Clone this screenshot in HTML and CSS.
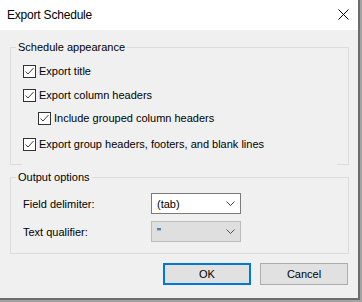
FILE: index.html
```html
<!DOCTYPE html>
<html>
<head>
<meta charset="utf-8">
<link rel="stylesheet" href="styles.css">
</head>
<body>
<div class="window">
  <div class="titlebar">
    <span class="title">Export Schedule</span>
    <span class="close">
      <svg width="11" height="11" viewBox="0 0 11 11"><path d="M0.5 0.5 L10.5 10.5 M10.5 0.5 L0.5 10.5" stroke="#000" stroke-width="1" fill="none"/></svg>
    </span>
  </div>
  <div class="content">
    <fieldset class="group group-appearance">
      <legend>Schedule appearance</legend>
      <div class="row r1"><span class="cb"><svg width="11" height="11" viewBox="0 0 11 11"><polyline points="1.5,5.5 4,8 9.5,2" fill="none" stroke="#3c3c3c" stroke-width="1"/></svg></span><span class="lbl">Export title</span></div>
      <div class="row r2"><span class="cb"><svg width="11" height="11" viewBox="0 0 11 11"><polyline points="1.5,5.5 4,8 9.5,2" fill="none" stroke="#3c3c3c" stroke-width="1"/></svg></span><span class="lbl">Export column headers</span></div>
      <div class="row r3 nested"><span class="cb"><svg width="11" height="11" viewBox="0 0 11 11"><polyline points="1.5,5.5 4,8 9.5,2" fill="none" stroke="#3c3c3c" stroke-width="1"/></svg></span><span class="lbl">Include grouped column headers</span></div>
      <div class="row r4"><span class="cb"><svg width="11" height="11" viewBox="0 0 11 11"><polyline points="1.5,5.5 4,8 9.5,2" fill="none" stroke="#3c3c3c" stroke-width="1"/></svg></span><span class="lbl">Export group headers, footers, and blank lines</span></div>
    </fieldset>
    <fieldset class="group group-output">
      <legend>Output options</legend>
      <div class="field f1">
        <span class="flabel">Field delimiter:</span>
        <span class="select"><span class="val">(tab)</span><svg width="9" height="5" viewBox="0 0 9 5"><polyline points="0.5,0.5 4.5,4.5 8.5,0.5" fill="none" stroke="#444" stroke-width="1"/></svg></span>
      </div>
      <div class="field f2">
        <span class="flabel">Text qualifier:</span>
        <span class="select disabled"><span class="val">"</span><svg width="9" height="5" viewBox="0 0 9 5"><polyline points="0.5,0.5 4.5,4.5 8.5,0.5" fill="none" stroke="#555" stroke-width="1"/></svg></span>
      </div>
    </fieldset>
    <div class="buttons">
      <span class="btn default">OK</span>
      <span class="btn">Cancel</span>
    </div>
  </div>
</div>
</body>
</html>
```
FILE: styles.css
```css
html, body {
  margin: 0;
  padding: 0;
}
body {
  background: #a3a3a3;
  width: 362px;
  height: 302px;
  overflow: hidden;
  font-family: "Liberation Sans", Arial, sans-serif;
  font-size: 11px;
  color: #000;
}
.window {
  width: 358px;
  height: 298px;
  background: #f0f0f0;
  border-right: 2px solid #6c6c6c;
  border-bottom: 2px solid #6c6c6c;
}
.titlebar {
  height: 30px;
  background: #fff;
  display: flex;
  align-items: center;
  padding-left: 7px;
}
.title {
  font-size: 12px;
  letter-spacing: -0.2px;
  line-height: 16px;
  margin-top: -1px;
}
.close {
  margin-left: auto;
  margin-right: 9px;
  width: 11px;
  height: 11px;
  display: flex;
  margin-top: -1px;
}
.content {
  padding-top: 10px;
}
.group {
  box-sizing: border-box;
  width: 339px;
  margin: 0 0 0 10px;
  padding: 0;
  border: 1px solid #dcdcdc;
  min-width: 0;
}
.group legend {
  margin-left: 5px;
  padding: 0 2px;
  line-height: 15px;
  height: 15px;
}
.row {
  display: flex;
  align-items: center;
  height: 16px;
  line-height: 16px;
  margin-left: 12px;
}
.cb {
  box-sizing: border-box;
  width: 13px;
  height: 13px;
  border: 1px solid #333;
  background: #fff;
  display: flex;
  margin-right: 3px;
}
.r1 { margin-top: 8px; }
.r2 { margin-top: 8px; }
.r3 { margin-top: 7px; margin-left: 27px; }
.r4 {
  margin-top: 10px;
  margin-left: 11px;
  padding-left: 1px;
  width: 314px;
  height: 16px;
  padding-bottom: 13px;
  margin-bottom: -1px;
  background: #f0f0f0;
  align-items: flex-start;
}
.r4 .cb { margin-top: 2px; }
.group-output {
  margin-top: 5px;
  padding-bottom: 11px;
}
.field {
  display: grid;
  grid-template-columns: 128px 90px;
  align-items: center;
  margin-left: 12px;
}
.f1 { margin-top: 8px; }
.f2 { margin-top: 7px; }
.flabel {
  line-height: 16px;
}
.select {
  box-sizing: border-box;
  height: 21px;
  border: 1px solid #7a7a7a;
  background: #fff;
  display: flex;
  align-items: center;
  padding: 0 5px 0 5px;
}
.select .val {
  flex: 1;
  line-height: 16px;
}
.select.disabled {
  background: #dfdfdf;
  border-color: #bcbcbc;
}
.buttons {
  display: flex;
  justify-content: flex-end;
  gap: 9px;
  margin-top: 9px;
  padding-right: 10px;
}
.btn {
  box-sizing: border-box;
  width: 88px;
  height: 22px;
  border: 1px solid #adadad;
  background: #e1e1e1;
  display: flex;
  align-items: center;
  justify-content: center;
}
.btn.default {
  border: 2px solid #0078d7;
}
```
